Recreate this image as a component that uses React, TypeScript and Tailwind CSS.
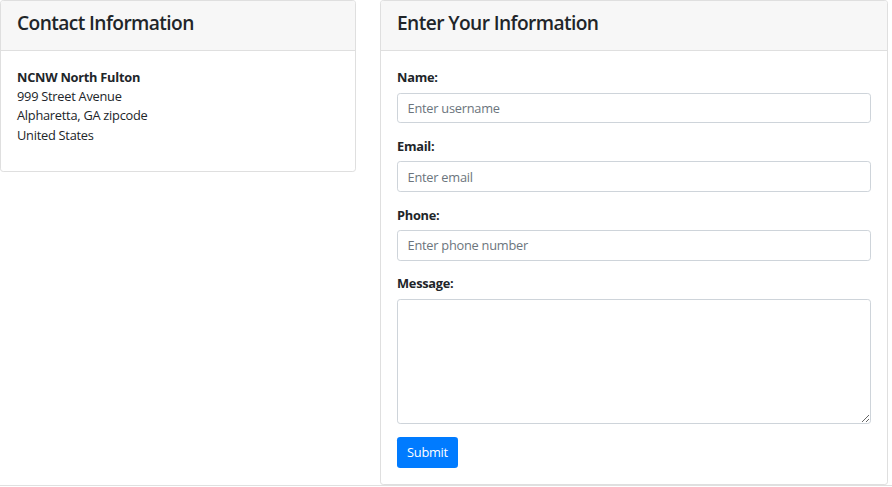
import React from "react";

const font = { fontFamily: '"Segoe UI", "Open Sans", "Noto Sans", sans-serif' };

function Field({ label, placeholder, type = "text" }: { label: string; placeholder: string; type?: string }) {
  return (
    <div className="mb-[12.8px]">
      <label className="block font-bold leading-[19.2px] pt-[1px] mb-[5.4px]">{label}</label>
      <input
        type={type}
        placeholder={placeholder}
        className="block w-full h-[30.4px] px-[9.6px] border border-[#ced4da] rounded-[3.2px] text-[12.8px] tracking-[-0.25px] text-[#495057] placeholder:text-[#6c757d] outline-none bg-white"
      />
    </div>
  );
}

export default function App() {
  return (
    <div style={font} className="w-[892px] h-[487px] bg-white text-[#212529] text-[12.8px] leading-[19.2px] tracking-[-0.25px] overflow-hidden">
      <div className="flex items-start h-[485px]">
        <div className="w-[356px] h-[172px] border border-[#dfdfdf] rounded-[3.2px] overflow-hidden">
          <div className="h-[50px] bg-[#f7f7f7] border-b border-[#dfdfdf] px-[16px] pt-[10px]">
            <h4 className="text-[19.2px] leading-[23px] font-semibold tracking-[-0.6px]">Contact Information</h4>
          </div>
          <div className="px-[16px] pt-[17px] pb-[15px]">
            <p>
              <strong className="font-bold">NCNW North Fulton</strong>
              <br />
              999 Street Avenue
              <br />
              Alpharetta, GA zipcode
              <br />
              United States
            </p>
          </div>
        </div>
        <div className="ml-[24px] w-[508px] h-[485px] border border-[#dfdfdf] rounded-[3.2px] overflow-hidden">
          <div className="h-[50px] bg-[#f7f7f7] border-b border-[#dfdfdf] px-[16px] pt-[10px]">
            <h4 className="text-[19.2px] leading-[23px] font-semibold tracking-[-0.6px]">Enter Your Information</h4>
          </div>
          <div className="p-[16px]">
            <Field label="Name:" placeholder="Enter username" />
            <Field label="Email:" placeholder="Enter email" type="email" />
            <Field label="Phone:" placeholder="Enter phone number" />
            <div className="mb-[12.8px]">
              <label className="block font-bold leading-[19.2px] pt-[1px] mb-[5.4px]">Message:</label>
              <textarea className="block w-full h-[125px] px-[9.6px] py-[4.8px] border border-[#ced4da] rounded-[3.2px] text-[12.8px] outline-none" />
            </div>
            <button className="h-[31px] w-[61px] pt-[1px] bg-[#007bff] text-white rounded-[3.2px] text-[12.8px] leading-[19.2px]">
              Submit
            </button>
          </div>
        </div>
      </div>
      <div className="h-[1px] bg-[#e0e0e0]" />
    </div>
  );
}
